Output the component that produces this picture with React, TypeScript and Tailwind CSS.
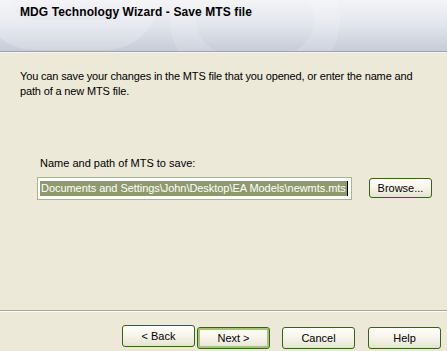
import React from "react";

function XpButton({ label, isDefault }: { label: string; isDefault?: boolean }) {
  return (
    <button
      className={`h-[22px] w-[73px] rounded-[3px] border border-[#37621a] bg-gradient-to-b from-[#fffff9] via-[#f6f4ea] to-[#e6e3d2] text-[11px] text-black ${
        isDefault ? "shadow-[inset_0_0_0_2px_#a9c27a]" : ""
      }`}
    >
      {label}
    </button>
  );
}

export default function App() {
  return (
    <div className="flex h-[351px] w-[447px] flex-col overflow-hidden bg-[#ece9d8] font-['Liberation_Sans',sans-serif] text-black">
      {/* header strip */}
      <div className="relative h-[51px] shrink-0 overflow-hidden bg-gradient-to-b from-[#f4f4f7] via-[#e1e5ec] to-[#c6ccd8] pl-[20px] pt-[3px]">
        <div className="absolute left-[-20px] top-[-60px] h-[110px] w-[180px] rounded-full border-[30px] border-white/20" />
        <div className="absolute left-[170px] top-[-40px] h-[120px] w-[170px] rounded-full border-[26px] border-white/15" />
        <h1 className="relative text-[12px] font-bold tracking-[0.1px]">
          MDG Technology Wizard - Save MTS file
        </h1>
      </div>
      <div className="h-px shrink-0 bg-[#9fa3aa]" />
      <div className="h-px shrink-0 bg-[#f6f5ee]" />

      {/* body */}
      <div className="flex flex-1 flex-col pl-[20px] pt-[16px]">
        <p className="text-[11px] leading-[15px] tracking-[-0.15px]">
          You can save your changes in the MTS file that you opened, or enter the name and
          <br />
          path of a new MTS file.
        </p>

        <div className="mt-[56px] pl-[20px] text-[11px]">Name and path of MTS to save:</div>
        <div className="mt-[5px] flex items-center">
          <div className="ml-[17px] flex h-[23px] w-[315px] shrink-0 items-center overflow-hidden whitespace-nowrap border border-[#a4b97f] bg-white pl-[2px]">
            <span className="shrink-0 bg-[#8e9a6d] px-px text-[11px] leading-[15px] tracking-[-0.05px] text-white">
              Documents and Settings\John\Desktop\EA Models\newmts.mts
            </span>
            <span className="h-[15px] w-px shrink-0 bg-black" />
          </div>
          <button className="ml-[17px] h-[20px] w-[63px] shrink-0 rounded-[3px] border border-[#37621a] bg-gradient-to-b from-[#fffff9] via-[#f6f4ea] to-[#e6e3d2] text-[11px]">
            Browse...
          </button>
        </div>
        <div className="flex-1" />
      </div>

      {/* footer */}
      <div className="h-px shrink-0 bg-[#aca899]" />
      <div className="h-px shrink-0 bg-white" />
      <div className="flex h-[39px] shrink-0 items-start justify-end pr-[6px] pt-[13px]">
        <XpButton label="< Back" />
        <div className="ml-[2px]">
          <XpButton label="Next >" isDefault />
        </div>
        <div className="ml-[12px]">
          <XpButton label="Cancel" />
        </div>
        <div className="ml-[13px]">
          <XpButton label="Help" />
        </div>
      </div>
    </div>
  );
}
